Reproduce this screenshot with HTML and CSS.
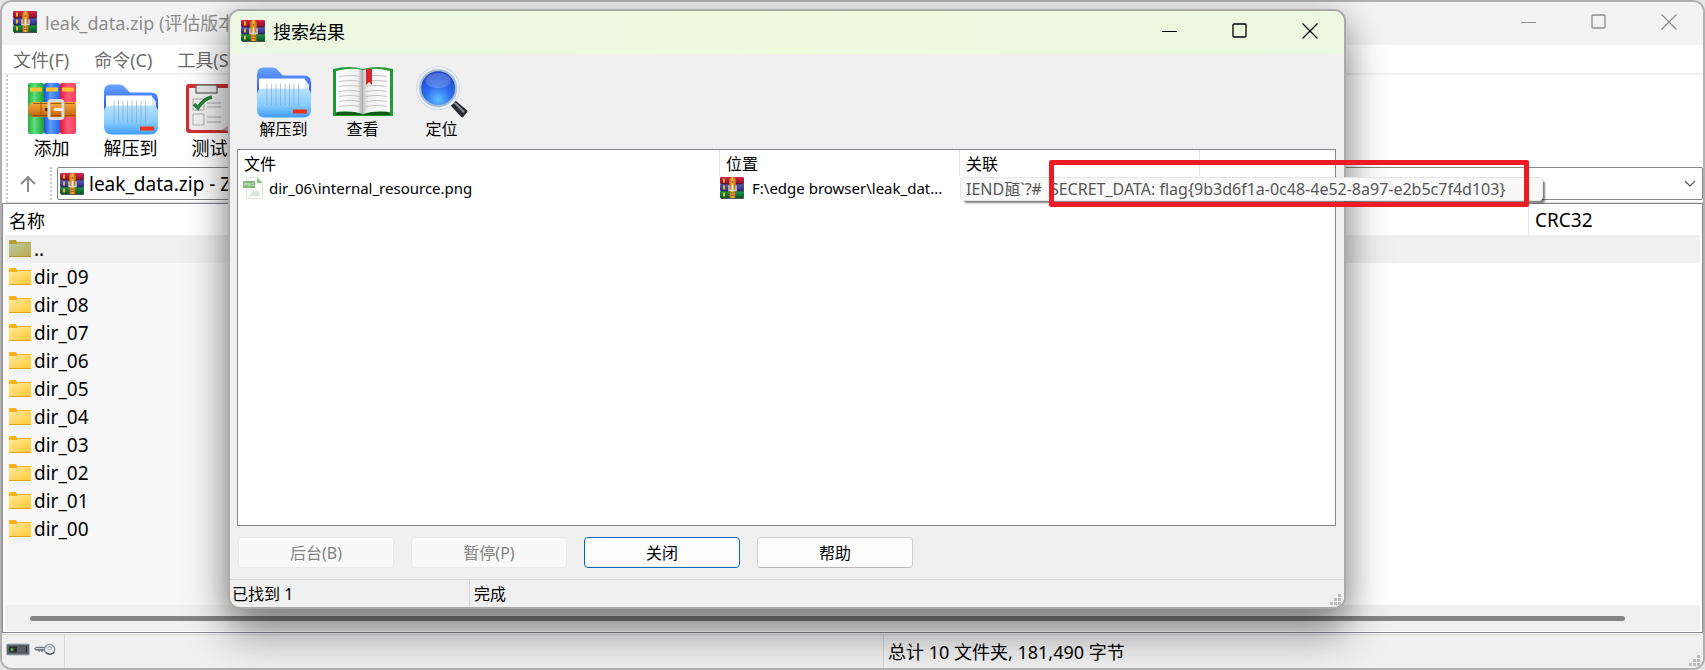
FILE: index.html
```html
<!DOCTYPE html>
<html lang="zh-CN">
<head>
    <meta charset="UTF-8">
    <meta name="viewport" content="width=device-width, initial-scale=1.0">
    <title>leak_data.zip</title>
    <link rel="stylesheet" href="styles.css">
</head>
<body>
    <!-- 公用图标 -->
    <svg class="sprite" aria-hidden="true">
        <defs>
            <linearGradient id="g-red" x1="0" y1="0" x2="0" y2="1"><stop offset="0" stop-color="#d8284a"/><stop offset="1" stop-color="#860f2c"/></linearGradient>
            <linearGradient id="g-blue" x1="0" y1="0" x2="0" y2="1"><stop offset="0" stop-color="#5a5cc0"/><stop offset="1" stop-color="#2b2a78"/></linearGradient>
            <linearGradient id="g-green" x1="0" y1="0" x2="0" y2="1"><stop offset="0" stop-color="#1f9a4c"/><stop offset="1" stop-color="#085426"/></linearGradient>
            <linearGradient id="g-belt" x1="0" y1="0" x2="1" y2="0"><stop offset="0" stop-color="#b8640f"/><stop offset=".5" stop-color="#f9b33a"/><stop offset="1" stop-color="#b05a08"/></linearGradient>
            <linearGradient id="g-strap" x1="0" y1="0" x2="0" y2="1"><stop offset="0" stop-color="#f9b040"/><stop offset="1" stop-color="#c0600c"/></linearGradient>
            <linearGradient id="g-fback" x1="0" y1="0" x2="0" y2="1"><stop offset="0" stop-color="#6aa6ff"/><stop offset=".5" stop-color="#2f62f0"/></linearGradient>
            <linearGradient id="g-ffront" x1="0" y1="0" x2="0" y2="1"><stop offset="0" stop-color="#b9e2ff"/><stop offset=".6" stop-color="#84cbfd"/><stop offset="1" stop-color="#3f9bf8"/></linearGradient>
            <linearGradient id="g-folder" x1="0" y1="0" x2="1" y2="1"><stop offset="0" stop-color="#ffe79c"/><stop offset="1" stop-color="#ffc931"/></linearGradient>
            <linearGradient id="g-folder-up" x1="0" y1="0" x2="1" y2="1"><stop offset="0" stop-color="#b9c8a0"/><stop offset="1" stop-color="#bdab4c"/></linearGradient>
            <linearGradient id="g-page" x1="0" y1="0" x2="1" y2="0"><stop offset="0" stop-color="#ffffff"/><stop offset=".8" stop-color="#f0f0f0"/><stop offset="1" stop-color="#a5a5a5"/></linearGradient>
            <linearGradient id="g-page-r" x1="1" y1="0" x2="0" y2="0"><stop offset="0" stop-color="#ffffff"/><stop offset=".8" stop-color="#f0f0f0"/><stop offset="1" stop-color="#c5c5c5"/></linearGradient>
            <radialGradient id="g-lens" cx=".5" cy=".8" r=".7"><stop offset="0" stop-color="#5cc0ff"/><stop offset=".5" stop-color="#2d6cf0"/><stop offset="1" stop-color="#1f44c8"/></radialGradient>
            <linearGradient id="g-b1" x1="0" y1="0" x2="1" y2="0"><stop offset="0" stop-color="#27a843"/><stop offset=".4" stop-color="#5fe07a"/><stop offset="1" stop-color="#1c9a3a"/></linearGradient>
            <linearGradient id="g-b2" x1="0" y1="0" x2="1" y2="0"><stop offset="0" stop-color="#1d50d8"/><stop offset=".4" stop-color="#5c9cff"/><stop offset="1" stop-color="#2a62e8"/></linearGradient>
            <linearGradient id="g-b3" x1="0" y1="0" x2="1" y2="0"><stop offset="0" stop-color="#e01838"/><stop offset=".5" stop-color="#ff5c78"/><stop offset="1" stop-color="#ff4060"/></linearGradient>
        </defs>
        <symbol id="i-rar" viewBox="0 0 24 22">
            <rect x="0" y="0" width="24" height="7" rx="1" fill="url(#g-red)"/>
            <rect x="0" y="7" width="24" height="7" rx="1" fill="url(#g-blue)"/>
            <rect x="0" y="14" width="24" height="7" rx="1" fill="url(#g-green)"/>
            <path d="M1 7h23M1 14h23M1 21.500h23" stroke="#2c2430" stroke-width=".8"/>
            <path d="M3 1.500h2v4H3zM3 8.500h2v4H3zM3 15.500h2v4H3z" fill="#f0b428"/>
            <path d="M9 3q1-3 3.500-3T16 3v7H9z" fill="url(#g-belt)"/>
            <path d="M9.500 10h6v11h-6z" fill="url(#g-belt)"/>
            <path d="M11 16h3M11 18.500h3" stroke="#8a4408" stroke-width=".8"/>
            <path d="M9 8.500v5h7v-5" fill="none" stroke="#d4d0cc" stroke-width="1.500"/>
            <path d="M12.500 8v5" stroke="#fff" stroke-width="1.500"/>
            <circle cx="12.500" cy="5" r=".8" fill="#7a3c08"/>
        </symbol>
        <symbol id="i-add" viewBox="0 0 48 52">
            <rect x="0" y="0" width="16" height="51" rx="2" fill="url(#g-b1)"/>
            <rect x="16" y="0" width="16" height="51" rx="2" fill="url(#g-b2)"/>
            <rect x="32" y="0" width="16" height="51" rx="2" fill="url(#g-b3)"/>
            <path d="M2 4.500h12v4H2zM18 4.500h12v4H18zM34 4.500h12v4H34z" fill="#fbc52d"/>
            <path d="M5 19h43v15H5q-5-2-5-7.500T5 19z" fill="url(#g-strap)"/>
            <path d="M13 19v15M36 19v15" stroke="#a85408"/>
            <path d="M5 20.500h42M5 32.500h42" stroke="#8a4206" stroke-width=".7"/>
            <circle cx="18.500" cy="26.500" r="1.800" fill="#5a2c04"/>
            <rect x="21" y="17.500" width="14" height="18" rx="2.500" fill="none" stroke="#dcdce0" stroke-width="3"/>
            <path d="M27 26.500h7" stroke="#eee" stroke-width="3" stroke-linecap="round"/>
        </symbol>
        <symbol id="i-extract" viewBox="0 0 54 51">
            <path d="M0 8q0-7 7-7h8q4 0 6 3l5 5h21q7 0 7 7v28H0z" fill="url(#g-fback)"/>
            <path d="M2 12h46v25H2z" fill="#fff"/>
            <path d="M48 13l4 5v15h-4z" fill="#dfe8f8"/>
            <path d="M0 28q0-6 7-6h40q7 0 7 6v15q0 8-8 8H8q-8 0-8-8z" fill="url(#g-ffront)"/>
            <path d="M10 17v22M14.500 17v22M19 17v22M23.500 17v22M28 17v22M32.500 17v22M37 17v22M41.500 17v22" stroke="#7a9cc0" stroke-width="1" opacity=".55"/>
            <rect x="36" y="43" width="14" height="4" fill="#f03218"/>
        </symbol>
        <symbol id="i-test" viewBox="0 0 48 50">
            <rect width="48" height="49" rx="3" fill="#cf2f35"/>
            <path d="M3 4h42v35l-8 7H6q-3 0-3-3z" fill="#f0f0f0"/>
            <path d="M36 46q6-2 9-10v11z" fill="#bbb"/>
            <path d="M10 9V3q0-2 2-2h17q2 0 2 2v6z" fill="#e8e8e8" stroke="#777" stroke-width="1.500"/>
            <path d="M7 15h11v11H7zM7 30h11v11H7z" fill="none" stroke="#aaa"/>
            <path d="M8 20l4 4Q17 15 26 13" fill="none" stroke="#25823a" stroke-width="3.500"/>
            <path d="M21 19h14M21 23h14M21 33h14M21 38h14" stroke="#aaa"/>
        </symbol>
        <symbol id="i-book" viewBox="0 0 60 50">
            <path d="M0 2Q16-2 30 2q14-4 30 0v47H0z" fill="#1f9c33"/>
            <path d="M2 48h56l-3-3H33l-3 3-3-3H5z" fill="#12581c"/>
            <path d="M3 4Q18 0 30 3v44Q18 43 3 45z" fill="url(#g-page)"/>
            <path d="M57 4Q42 0 30 3v44q12-4 27-2z" fill="url(#g-page-r)"/>
            <path d="M6 9.500q11-2 21 0M6 14.500q11-2 21 0M6 19.500q11-2 21 0M6 24.500q11-2 21 0M6 29.500q11-2 21 0M6 34.500q11-2 21 0M6 39.500q11-2 21 0M33 9.500q11-2 21 0M33 14.500q11-2 21 0M33 19.500q11-2 21 0M33 24.500q11-2 21 0M33 29.500q11-2 21 0M33 34.500q11-2 21 0M33 39.500q11-2 21 0" fill="none" stroke="#c4c4c4" stroke-width="1.200"/>
            <path d="M33 2h6v16l-3-3-3 3z" fill="#d3252b"/>
        </symbol>
        <symbol id="i-find" viewBox="0 0 54 54">
            <path d="M35 40l5-5 13 11q1 1 0 2l-4 5q-1 1-2 0z" fill="#2a2c33"/>
            <path d="M40 38l10 10" stroke="#8b8f99" stroke-width="2"/>
            <circle cx="23" cy="23" r="20" fill="url(#g-lens)" stroke="#a9bccd" stroke-width="5"/>
            <circle cx="23" cy="23" r="21" fill="none" stroke="#e6eff6" stroke-width="2.500"/>
            <ellipse cx="23" cy="15" rx="13" ry="8" fill="#fff" opacity=".2"/>
        </symbol>
        <symbol id="i-folder" viewBox="0 0 22 17">
            <path d="M0 1q0-1 1-1h6l1 2h14v3H0z" fill="#f7b21c"/>
            <path d="M0 4h8l1-1h13v14H0z" fill="url(#g-folder)"/>
            <path d="M0 16.500h22" stroke="#e8a420"/>
        </symbol>
        <symbol id="i-folder-up" viewBox="0 0 22 17">
            <path d="M0 1q0-1 1-1h6l1 2h14v3H0z" fill="#b5a13c"/>
            <path d="M0 4h8l1-1h13v14H0z" fill="url(#g-folder-up)"/>
            <path d="M0 16.500h22" stroke="#a8963c"/>
        </symbol>
        <symbol id="i-png" viewBox="0 0 20 22">
            <path d="M3.500.5H14L19.500 6v15.500h-16z" fill="#fbfdfb" stroke="#dbe9dc"/>
            <path d="M14 .5V6h5.500z" fill="#8fbf87"/>
            <path d="M7 19v-2l3-3 2 1 2-2 3 4v2z" fill="#d4e8dc"/>
            <rect x="0" y="4" width="12" height="7" fill="#86b77a"/>
            <path d="M2 9V6h1.500v1.500H2M5 9V6l2 3V6M10.500 6H9v3h1.500V8" fill="none" stroke="#e6f2e2" stroke-width=".6"/>
        </symbol>
        <symbol id="i-min" viewBox="0 0 16 16"><path d="M0 8.500h15" stroke="currentColor"/></symbol>
        <symbol id="i-max" viewBox="0 0 16 16"><rect x="1" y="1" width="13" height="13" rx="1" fill="none" stroke="currentColor" stroke-width="1.300"/></symbol>
        <symbol id="i-close" viewBox="0 0 16 16"><path d="M.5.500l15 15M15.500.5l-15 15" stroke="currentColor" stroke-width="1.200"/></symbol>
        <symbol id="i-grip" viewBox="0 0 12 12"><path d="M8 0h3v3H8zM4 4h3v3H4zM8 4h3v3H8zM0 8h3v3H0zM4 8h3v3H4zM8 8h3v3H8z" fill="#bcbcbc"/></symbol>
    </svg>

    <!-- 主窗口 -->
    <div class="window main-window">
        <header class="titlebar">
            <svg class="rar-icon"><use href="#i-rar"/></svg>
            <span class="title">leak_data.zip (评估版本)</span>
            <div class="controls">
                <button aria-label="最小化"><svg><use href="#i-min"/></svg></button>
                <button aria-label="最大化"><svg><use href="#i-max"/></svg></button>
                <button aria-label="关闭窗口"><svg><use href="#i-close"/></svg></button>
            </div>
        </header>
        <nav class="menubar">
            <button>文件(F)</button>
            <button>命令(C)</button>
            <button>工具(S)</button>
        </nav>
        <div class="toolbar main-toolbar">
            <button><svg class="icon-add"><use href="#i-add"/></svg>添加</button>
            <button><svg class="icon-extract"><use href="#i-extract"/></svg>解压到</button>
            <button><svg class="icon-test"><use href="#i-test"/></svg>测试</button>
        </div>
        <div class="address-row">
            <button class="up-button" aria-label="上一级">
                <svg viewBox="0 0 16 16"><path d="M8 16V1M1 8l7-7 7 7" fill="none" stroke="#8a8a8a" stroke-width="2"/></svg>
            </button>
            <div class="address">
                <svg class="rar-icon"><use href="#i-rar"/></svg>
                <span>leak_data.zip - ZIP</span>
                <svg class="chevron" viewBox="0 0 12 8"><path d="M1 1l5 5 5-5" fill="none" stroke="#555" stroke-width="1.200"/></svg>
            </div>
        </div>
        <div class="file-list">
            <table class="files">
                <thead>
                    <tr><th class="col-name">名称</th><th></th><th class="col-crc">CRC32</th></tr>
                </thead>
                <tbody>
                    <tr class="current"><td><span class="cell"><svg><use href="#i-folder-up"/></svg>..</span></td><td></td><td></td></tr>
                    <tr><td><span class="cell"><svg><use href="#i-folder"/></svg>dir_09</span></td><td></td><td></td></tr>
                    <tr><td><span class="cell"><svg><use href="#i-folder"/></svg>dir_08</span></td><td></td><td></td></tr>
                    <tr><td><span class="cell"><svg><use href="#i-folder"/></svg>dir_07</span></td><td></td><td></td></tr>
                    <tr><td><span class="cell"><svg><use href="#i-folder"/></svg>dir_06</span></td><td></td><td></td></tr>
                    <tr><td><span class="cell"><svg><use href="#i-folder"/></svg>dir_05</span></td><td></td><td></td></tr>
                    <tr><td><span class="cell"><svg><use href="#i-folder"/></svg>dir_04</span></td><td></td><td></td></tr>
                    <tr><td><span class="cell"><svg><use href="#i-folder"/></svg>dir_03</span></td><td></td><td></td></tr>
                    <tr><td><span class="cell"><svg><use href="#i-folder"/></svg>dir_02</span></td><td></td><td></td></tr>
                    <tr><td><span class="cell"><svg><use href="#i-folder"/></svg>dir_01</span></td><td></td><td></td></tr>
                    <tr><td><span class="cell"><svg><use href="#i-folder"/></svg>dir_00</span></td><td></td><td></td></tr>
                </tbody>
            </table>
            <div class="list-rest"></div>
            <div class="scrollbar"><div class="thumb"></div></div>
        </div>
        <footer class="statusbar">
            <div class="status-icons">
                <svg viewBox="0 0 24 12"><rect x=".5" y=".5" width="23" height="11" rx="1" fill="#5b6468" stroke="#a8bcc4"/><rect x="3" y="3" width="18" height="6" fill="#2b3033"/><rect x="11" y="3" width="9" height="6" fill="#596063"/><circle cx="6" cy="6" r="1.500" fill="#5fc02c"/></svg>
                <svg viewBox="0 0 24 14"><path d="M0 6l3-2h10v5h-2l-1-1-1 2-2-2-1 2-2-2H2z" fill="#707a80"/><path d="M2 6h10" stroke="#dde3e6"/><circle cx="17" cy="7" r="5.500" fill="#e9eef2" stroke="#8a989f" stroke-width="1.500"/><circle cx="17" cy="5.500" r="2" fill="#fff" stroke="#8fa3b0"/><path d="M13 10q4 4 9 0" fill="none" stroke="#4f5d66" stroke-width="1.500"/></svg>
            </div>
            <div class="status-left"></div>
            <div class="status-total">总计 10 文件夹, 181,490 字节</div>
            <svg class="grip"><use href="#i-grip"/></svg>
        </footer>
    </div>

    <!-- 搜索结果 -->
    <div class="window dialog" role="dialog" aria-label="搜索结果">
        <header class="titlebar">
            <svg class="rar-icon"><use href="#i-rar"/></svg>
            <span class="title">搜索结果</span>
            <div class="controls">
                <button aria-label="最小化"><svg><use href="#i-min"/></svg></button>
                <button aria-label="最大化"><svg><use href="#i-max"/></svg></button>
                <button aria-label="关闭窗口"><svg><use href="#i-close"/></svg></button>
            </div>
        </header>
        <div class="toolbar dialog-toolbar">
            <button><svg class="icon-extract"><use href="#i-extract"/></svg>解压到</button>
            <button><svg class="icon-book"><use href="#i-book"/></svg>查看</button>
            <button><svg class="icon-find"><use href="#i-find"/></svg>定位</button>
        </div>
        <div class="results">
            <table>
                <thead>
                    <tr><th class="col-file">文件</th><th class="col-place">位置</th><th class="col-place">关联</th><th></th></tr>
                </thead>
                <tbody>
                    <tr>
                        <td><span class="cell"><svg class="icon-png"><use href="#i-png"/></svg>dir_06\internal_resource.png</span></td>
                        <td class="place"><span class="cell"><svg class="rar-icon"><use href="#i-rar"/></svg>F:\edge browser\leak_dat...</span></td>
                        <td></td>
                        <td></td>
                    </tr>
                </tbody>
            </table>
        </div>
        <div class="actions">
            <button disabled>后台(B)</button>
            <button disabled>暂停(P)</button>
            <button class="default">关闭</button>
            <button>帮助</button>
        </div>
        <footer class="statusbar">
            <div class="found">已找到 1</div>
            <div class="done">完成</div>
            <svg class="grip"><use href="#i-grip"/></svg>
        </footer>
        <div class="tooltip"><span>IEND瓸`?#</span><span>SECRET_DATA: flag{9b3d6f1a-0c48-4e52-8a97-e2b5c7f4d103}</span></div>
        <div class="highlight"></div>
    </div>
</body>
</html>
```

FILE: styles.css
```css
* {
    box-sizing: border-box;
}

body {
    margin: 0;
    position: relative;
    height: 100vh;
    min-height: 620px;
    background-color: #e4e4e4;
    font-family: "Noto Sans", "Noto Sans CJK SC", sans-serif;
    color: #000;
    overflow: hidden;
}

button {
    font: inherit;
    color: inherit;
    background: none;
    border: none;
    padding: 0;
}

.sprite {
    position: absolute;
    width: 0;
    height: 0;
}

.window {
    display: flex;
    flex-direction: column;
    border: 2px solid #b0b0b0;
    border-radius: 12px;
    overflow: hidden;
}

.main-window {
    height: 100%;
    background-color: #fff;
    font-size: 18px;
}

.titlebar {
    display: flex;
    align-items: center;
    flex: none;
    height: 43px;
    padding: 0 26px 4px 11px;
}

.rar-icon {
    width: 24px;
    height: 22px;
    flex: none;
}

.title {
    margin-left: 8px;
}

.controls {
    display: flex;
    gap: 54px;
    margin-left: auto;
}

.controls svg {
    display: block;
    width: 16px;
    height: 16px;
}

.main-window .titlebar {
    background-color: #f3f3f3;
    color: #8c8c8c;
}

/* 菜单 */
.menubar {
    display: flex;
    gap: 25px;
    flex: none;
    height: 30px;
    padding: 0 11px;
    border-bottom: 2px solid #f0f0f0;
    color: #6d6d6d;
}

/* 工具栏 */
.toolbar {
    display: flex;
    flex: none;
}

.toolbar button {
    display: flex;
    flex-direction: column;
    align-items: center;
    width: 79px;
}

.main-toolbar {
    height: 90px;
    margin-left: 4px;
    padding: 8px 0 0 4px;
    border-left: 2px dotted #ccc;
    line-height: 26px;
}

.icon-add {
    width: 48px;
    height: 52px;
}

.icon-extract {
    width: 54px;
    height: 52px;
}

.icon-test {
    width: 48px;
    height: 52px;
}

.address-row {
    display: flex;
    flex: none;
    height: 38px;
    margin-left: 4px;
    padding: 2px 0;
    border-left: 2px dotted #ccc;
    border-bottom: 1px solid #e0e0e0;
}

.up-button {
    width: 44px;
    padding-right: 3px;
    border-right: 2px dotted #ccc;
}

.up-button svg {
    display: block;
    width: 16px;
    height: 16px;
    margin: 0 auto;
}

.address {
    display: flex;
    align-items: center;
    gap: 5px;
    flex: 1;
    margin-left: 5px;
    padding: 0 6px 0 2px;
    border: 1px solid #858585;
    border-radius: 2px;
    font-size: 19px;
}

.chevron {
    width: 12px;
    height: 8px;
    margin-left: auto;
}

/* 文件列表 */
.file-list {
    display: flex;
    flex-direction: column;
    flex: 1;
    padding: 0 2px 1px;
    border: 1px solid #828790;
}

table {
    width: 100%;
    border-spacing: 0;
    table-layout: fixed;
}

th {
    text-align: left;
    font-weight: normal;
}

th,
td {
    padding: 0;
    white-space: nowrap;
}

.files th {
    height: 31px;
    padding-left: 4px;
    border-right: 1px solid #e5e5e5;
}

.files th:last-child {
    border-right: none;
}

.files td {
    height: 28px;
    line-height: 28px;
}

.files td:first-child {
    padding-left: 4px;
    background-color: #f7f7f7;
}

.files .current td,
.files .current td:first-child {
    background-color: #f0f0f0;
}

.col-name {
    width: 300px;
}

.files .col-crc {
    width: 171px;
    padding-left: 6px;
    font-size: 19px;
}

.cell {
    display: flex;
    align-items: center;
    gap: 3px;
}

.files .cell {
    height: 28px;
    padding-bottom: 1px;
    font-size: 19px;
}

.files .cell svg {
    width: 22px;
    height: 17px;
}

.list-rest {
    flex: 1;
    width: 300px;
    background-color: #f7f7f7;
}

.scrollbar {
    flex: none;
    height: 26px;
    padding: 11px 75px 10px 25px;
    background-color: #f0f0f0;
}

.thumb {
    height: 5px;
    border-radius: 3px;
    background-color: #858585;
}

/* 状态栏 */
.statusbar {
    display: flex;
    flex: none;
    position: relative;
    background-color: #f0f0f0;
    border-top: 1px solid #d7d7d7;
}

.main-window .statusbar {
    height: 34px;
    margin-top: 1px;
    line-height: 34px;
}

.status-icons {
    display: flex;
    gap: 3px;
    width: 63px;
    padding: 8px 4px;
    border-right: 1px solid #d7d7d7;
}

.status-icons svg {
    width: 24px;
    height: 13px;
}

.status-left {
    width: 819px;
    border-right: 1px solid #d7d7d7;
}

.status-total {
    padding-left: 4px;
}

.grip {
    position: absolute;
    right: 2px;
    bottom: 1px;
    width: 12px;
    height: 12px;
}

/* 搜索结果窗口 */
.dialog {
    position: absolute;
    top: 9px;
    bottom: 61px;
    left: 228px;
    right: 359px;
    overflow: visible;
    background-color: #f0f0f0;
    background-clip: padding-box;
    border-color: #aaa;
    box-shadow: 0 24px 44px rgba(0, 0, 0, .4), 0 4px 30px rgba(0, 0, 0, .2);
    font-size: 16px;
}

.dialog .titlebar {
    border-radius: 10px 10px 0 0;
    background: linear-gradient(to right, #ebf7e3, #eef8db 50%, #ecf7e1);
    font-size: 18px;
}

.dialog-toolbar {
    height: 95px;
    padding: 12px 0 0 14px;
    line-height: 22px;
}

.icon-book {
    width: 60px;
    height: 52px;
}

.icon-find {
    width: 54px;
    height: 52px;
}

.results {
    flex: 1;
    margin: 0 8px 0 7px;
    background-color: #fff;
    border: 1px solid #828790;
}

.results th {
    height: 26px;
    padding-left: 6px;
    border-right: 1px solid #e5e5e5;
}

.results th:last-child {
    border-right: none;
}

.results td {
    height: 24px;
    padding-left: 5px;
    line-height: 24px;
    font-size: 15px;
}

.results td.place {
    padding-left: 0;
}

.results .cell {
    gap: 6px;
}

.results .place .cell {
    gap: 8px;
}

.col-file {
    width: 482px;
}

.col-place {
    width: 240px;
}

.icon-png {
    width: 20px;
    height: 22px;
}

.actions {
    display: flex;
    gap: 17px;
    padding: 11px 8px;
}

.actions button {
    width: 156px;
    height: 31px;
    border: 1px solid #d0d0d0;
    border-bottom-color: #b8b8b8;
    border-radius: 4px;
    background-color: #fdfdfd;
    line-height: 28px;
}

.actions button:disabled {
    color: #838383;
    background-color: #f9f9f9;
    border-color: #e9e9e9;
}

.actions .default {
    border-color: #0067c0;
}

.dialog .statusbar {
    height: 28px;
    line-height: 28px;
    border-radius: 0 0 10px 10px;
}

.found {
    width: 240px;
    padding-left: 2px;
    border-right: 1px solid #d7d7d7;
}

.done {
    padding-left: 4px;
}

.tooltip {
    position: absolute;
    top: 166px;
    left: 730px;
    display: flex;
    gap: 8px;
    width: 583px;
    height: 24px;
    padding-left: 5px;
    line-height: 22px;
    white-space: nowrap;
    color: #575757;
    background-color: #f9f9f9;
    border: 1px solid #e5e5e5;
    border-radius: 4px;
    box-shadow: 3px 3px 2px -1px rgba(0, 0, 0, .5);
}

/* 红框标注 */
.highlight {
    position: absolute;
    top: 149px;
    left: 819px;
    width: 480px;
    height: 47px;
    border: 5px solid #ed1c24;
    border-radius: 2px;
}
```
